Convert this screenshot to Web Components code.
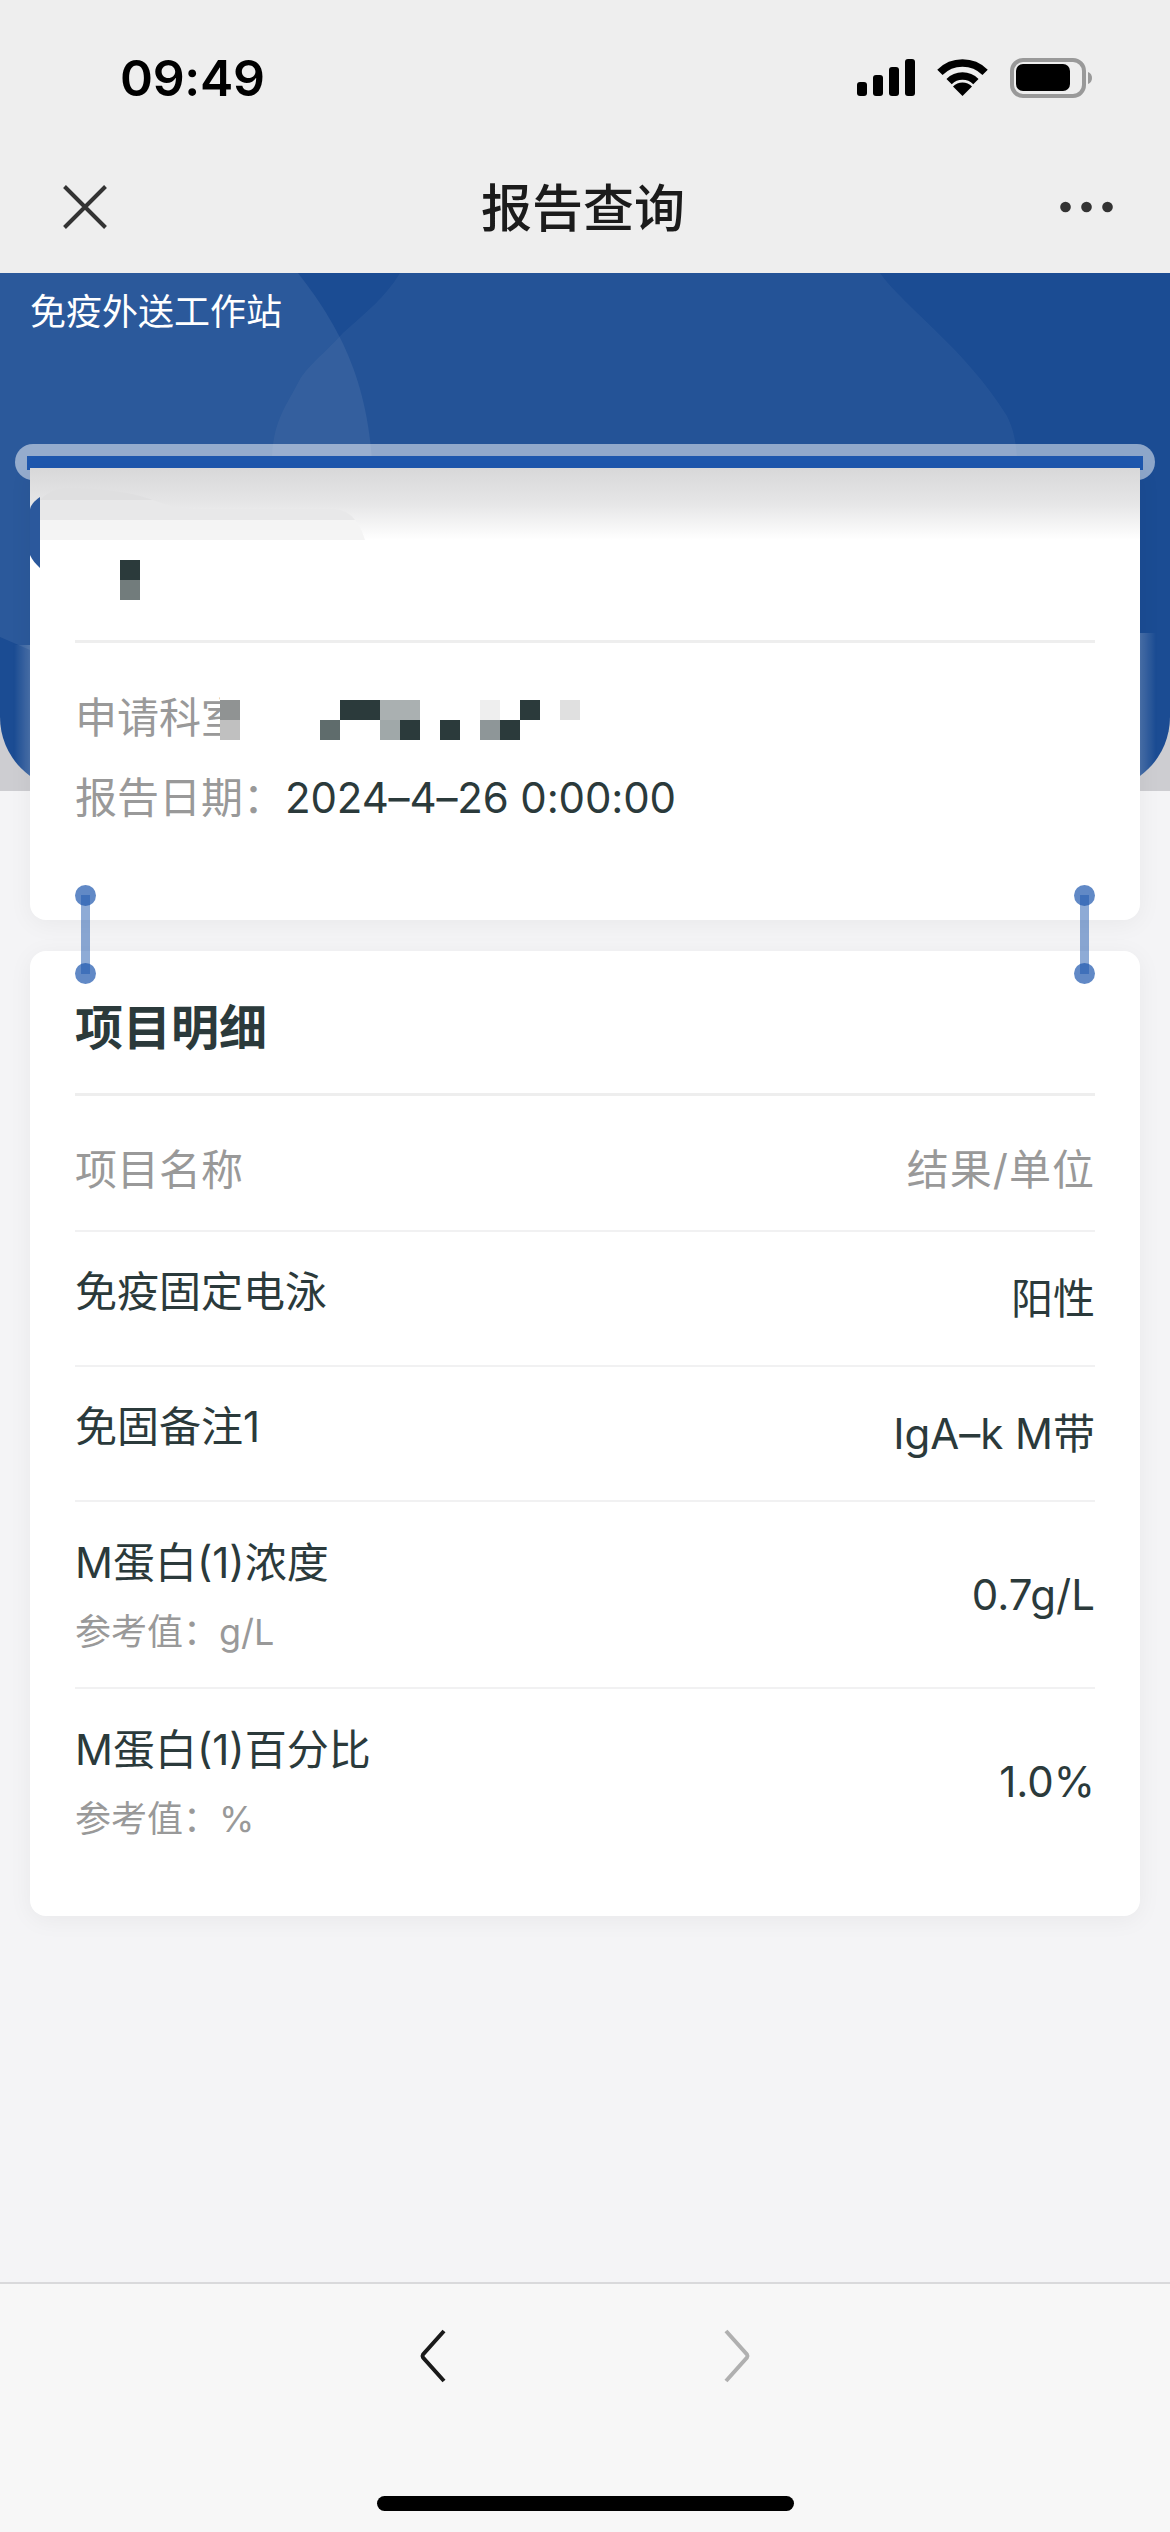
<!DOCTYPE html>
<html lang="zh">
<head>
<meta charset="utf-8">
<title>报告查询</title>
<style>
    html, body { margin: 0; padding: 0; background: #f4f4f6; }
    body { font-family: Inter, "Noto Sans CJK SC", sans-serif; }
    report-page { width: 1170px; height: 2532px; }
</style>
</head>
<body>

<report-page>
    <status-bar time="09:49"></status-bar>
    <nav-bar>报告查询</nav-bar>

    <div slot="main">
        <report-hero>免疫外送工作站</report-hero>
        <card-stack>
            <print-slot></print-slot>

            <report-card printed>
                <div slot="head" style="height:172px"></div>
                <info-line label="申请科室："></info-line>
                <info-line label="报告日期：">2024–4–26 0:00:00</info-line>
                <mosaic-block style="left:90px;top:92px;width:20px;height:40px" nopad cells="0,0,#2b3a3b 0,1,#727c7c"></mosaic-block>
                <mosaic-block style="left:190px;top:227px;width:360px;height:50px" cells="0,0,#909393 0,1,#c0c0c0 5,1,#5f6c6c 6,0,#2b3a3b 7,0,#2b3a3b 8,0,#aab0b1 9,0,#aab0b1 8,1,#a0a8a9 9,1,#2b3a3b 11,1,#2b3a3b 13,0,#eeeeee 13,1,#8e9698 14,1,#2b3a3b 15,0,#2b3a3b 17,0,#e0e0e0"></mosaic-block>
            </report-card>

            <report-card>
                <h2-title slot="head">项目明细</h2-title>
                <detail-row head>
                    <span slot="name">项目名称</span>
                    <span slot="value" style="letter-spacing:1px">结果/单位</span>
                </detail-row>
                <detail-row>
                    <span slot="name">免疫固定电泳</span>
                    <span slot="value">阳性</span>
                </detail-row>
                <detail-row>
                    <span slot="name">免固备注1</span>
                    <span slot="value">IgA–k M带</span>
                </detail-row>
                <detail-row tall>
                    <span slot="name">M蛋白(1)浓度</span>
                    <span slot="ref">参考值：g/L</span>
                    <span slot="value">0.7g/L</span>
                </detail-row>
                <detail-row tall last>
                    <span slot="name">M蛋白(1)百分比</span>
                    <span slot="ref">参考值：%</span>
                    <span slot="value">1.0%</span>
                </detail-row>
            </report-card>

            <card-rivet side="left"></card-rivet>
            <card-rivet side="right"></card-rivet>
        </card-stack>
    </div>

    <bottom-toolbar slot="foot"></bottom-toolbar>
</report-page>

<script>
class ReportPage extends HTMLElement {
    constructor() {
        super()
        this.attachShadow({ mode: 'open' }).innerHTML = `
            <style>
                :host { display: flex; flex-direction: column; overflow: hidden; background: #f4f4f6; color: #2b3a3b; }
                .main { flex: 1; min-height: 0; }
            </style>
            <slot></slot>
            <div class="main"><slot name="main"></slot></div>
            <slot name="foot"></slot>
        `
    }
}

class StatusBar extends HTMLElement {
    constructor() {
        super()
        this.attachShadow({ mode: 'open' }).innerHTML = `
            <style>
                :host { display: flex; height: 154px; box-sizing: border-box; padding: 2px 78px 0 120px; align-items: center; justify-content: space-between; background: #eeeeee; }
                .time { font: 600 50px/1 Inter, "Liberation Sans", sans-serif; letter-spacing: -.3px; color: #000; }
                svg { display: block; }
            </style>
            <span class="time">${this.getAttribute('time')}</span>
            <svg width="235" height="40" viewBox="0 0 235 40">
                <rect x="0" y="24" width="10" height="14" rx="3"/>
                <rect x="16" y="17" width="10" height="21" rx="3"/>
                <rect x="32" y="9" width="10" height="29" rx="3"/>
                <rect x="48" y="1" width="10" height="37" rx="3"/>
                <path d="M82.9 14.4A32 32 0 0 1 128.1 14.4M92.1 23.6A19 19 0 0 1 118.9 23.6" fill="none" stroke="#000" stroke-width="7.5"/>
                <path d="M105.5 38L96 28.5A13.4 13.4 0 0 1 115 28.5Z"/>
                <rect x="155" y="2" width="72" height="36" rx="11" fill="none" stroke="#999" stroke-width="4"/>
                <rect x="159" y="6" width="54" height="27" rx="7"/>
                <path d="M231 14C234 15 235 17.500 235 20C235 22.500 234 25 231 26Z" fill="#999"/>
            </svg>
        `
    }
}

class NavBar extends HTMLElement {
    constructor() {
        super()
        this.attachShadow({ mode: 'open' }).innerHTML = `
            <style>
                :host { display: flex; height: 119px; box-sizing: border-box; padding: 0 57px 17px 63px; align-items: center; justify-content: space-between; background: #eeeeee; }
                .title { font: 500 51px/1 "Noto Sans CJK SC", sans-serif; color: #1b1b1b; margin-left: -1px; }
                svg { display: block; margin-top: 3px; }
            </style>
            <svg width="44" height="44" viewBox="0 0 44 44"><path d="M1.500 1.500L42.500 42.500M42.500 1.500L1.500 42.500" fill="none" stroke="#333" stroke-width="4"/></svg>
            <span class="title"><slot></slot></span>
            <svg width="53" height="12" viewBox="0 0 53 12" fill="#333"><circle cx="5.500" cy="6" r="5.300"/><circle cx="26.500" cy="6" r="5.300"/><circle cx="47.500" cy="6" r="5.300"/></svg>
        `
    }
}

class ReportHero extends HTMLElement {
    constructor() {
        super()
        this.attachShadow({ mode: 'open' }).innerHTML = `
            <style>
                :host { display: block; position: relative; height: 518px; background: #cdcdd1; overflow: hidden; }
                .blue { height: 517px; box-sizing: border-box; padding: 11px 30px; border-radius: 0 0 73px 73px; overflow: hidden; position: relative; background: #1b4c93; }
                svg { position: absolute; left: 0; top: 0; }
                .name { position: relative; font: 400 36px/50px "Noto Sans CJK SC", sans-serif; color: #fff; }
            </style>
            <div class="blue">
                <svg width="1170" height="518" viewBox="0 0 1170 518">
                    <defs>
                        <linearGradient id="glowL" x1="0" x2="1"><stop offset="0" stop-color="#fff" stop-opacity="0"/><stop offset="1" stop-color="#fff" stop-opacity=".2"/></linearGradient>
                        <linearGradient id="glowR" x1="1" x2="0"><stop offset="0" stop-color="#fff" stop-opacity="0"/><stop offset="1" stop-color="#fff" stop-opacity=".2"/></linearGradient>
                    </defs>
                    <path d="M400 0H880C905 35 965 75 1007 143C1013 155 1017 170 1017 190V518H272V190C272 150 285 135 298 110C305 95 320 85 343 60C365 40 385 25 400 0Z" fill="#fff" fill-opacity=".045"/>
                    <path d="M0 0H298C345 60 373 120 373 220C373 340 100 400 30 377L0 364Z" fill="#fff" fill-opacity=".075"/>
                    <rect x="14" y="372" width="16" height="146" fill="url(#glowL)"/>
                    <rect x="1140" y="360" width="16" height="158" fill="url(#glowR)"/>
                </svg>
                <div class="name"><slot></slot></div>
            </div>
        `
    }
}

class CardStack extends HTMLElement {
    constructor() {
        super()
        this.attachShadow({ mode: 'open' }).innerHTML = `
            <style>
                :host { display: flex; flex-direction: column; gap: 0; position: relative; margin-top: -347px; }
                ::slotted(report-card:last-of-type) { margin-top: 31px; }
            </style>
            <slot></slot>
        `
    }
}

class PrintSlot extends HTMLElement {
    constructor() {
        super()
        this.attachShadow({ mode: 'open' }).innerHTML = `
            <style>
                :host { display: block; position: relative; height: 24px; margin: 0 15px; }
                .bar { height: 36px; border-radius: 18px; background: rgba(255,255,255,.5); }
                .strip { position: absolute; left: 12px; right: 12px; top: 12px; height: 14px; background: #1e57ae; }
            </style>
            <div class="bar"></div>
            <div class="strip"></div>
        `
    }
}

class ReportCard extends HTMLElement {
    constructor() {
        super()
        const printed = this.hasAttribute('printed')
        this.attachShadow({ mode: 'open' }).innerHTML = `
            <style>
                :host { display: block; position: relative; z-index: 1; margin: 0 30px; background: #fff; border-radius: 0 0 16px 16px; box-shadow: 0 4px 24px rgba(0,0,0,.05); }
                :host(:not([printed])) { border-radius: 16px; }
                .fold { position: absolute; left: 0; top: 0; display: block; }
                .head { position: relative; margin: 0 45px; border-bottom: 3px solid #eeeeee; }
                .body { padding: 45px 45px 92px; }
                :host(:not([printed])) .body { padding: 0 45px 41px; }
            </style>
            ${printed ? `
            <svg class="fold" width="1110" height="110" viewBox="0 0 1110 110">
                <defs>
                    <linearGradient id="fade" x1="0" x2="0" y1="0" y2="1"><stop offset="0" stop-color="#d8d8d9"/><stop offset=".5" stop-color="#e6e6e7"/><stop offset="1" stop-color="#fff"/></linearGradient>
                    <clipPath id="ghost"><path d="M10 32C20 22 30 20 37 20C70 20 100 24 120 31C140 38 150 41 170 41H303C320 41 330 55 335 72H10Z"/></clipPath>
                </defs>
                <rect width="1110" height="72" fill="url(#fade)"/>
                <g clip-path="url(#ghost)">
                    <rect x="10" y="20" width="330" height="12" fill="#dfdfe0"/>
                    <rect x="10" y="32" width="330" height="20" fill="#e8e8e9"/>
                    <rect x="10" y="52" width="330" height="20" fill="#f4f4f4"/>
                </g>
                <path d="M10 29C4 33 0 38 0 42V87C2 92 6 96 10 100Z" fill="#2b589c"/>
            </svg>` : ''}
            <div class="head"><slot name="head"></slot></div>
            <div class="body"><slot></slot></div>
        `
    }
}

class H2Title extends HTMLElement {
    constructor() {
        super()
        this.attachShadow({ mode: 'open' }).innerHTML = `
            <style>
                :host { display: block; height: 142px; box-sizing: border-box; padding-top: 43px; font: 700 48px/60px "Noto Sans CJK SC", sans-serif; color: #2b3a3b; }
            </style>
            <slot></slot>
        `
    }
}

class InfoLine extends HTMLElement {
    constructor() {
        super()
        this.attachShadow({ mode: 'open' }).innerHTML = `
            <style>
                :host { display: flex; font: 400 42px/60px Inter, "Noto Sans CJK SC", sans-serif; letter-spacing: -.15px; color: #2b3a3b; }
                :host(:not(:first-of-type)) { margin-top: 20px; }
                .label { color: #999; letter-spacing: 0; }
            </style>
            <span class="label">${this.getAttribute('label')}</span>
            <slot></slot>
        `
    }
}

class MosaicBlock extends HTMLElement {
    constructor() {
        super()
        const cells = (this.getAttribute('cells') || '').split(' ').map((c) => {
            const [col, row, color] = c.split(',')
            return `<i style="grid-column:${+col + 1};grid-row:${+row + 1};background:${color}"></i>`
        }).join('')
        this.attachShadow({ mode: 'open' }).innerHTML = `
            <style>
                :host { display: block; position: absolute; background: #fff; }
                .grid { display: grid; grid-template-columns: repeat(18, 20px); grid-template-rows: repeat(2, 20px); padding-top: 5px; }
                :host([nopad]) .grid { padding-top: 0; }
                i { display: block; }
            </style>
            <div class="grid">${cells}</div>
        `
    }
}

class DetailRow extends HTMLElement {
    constructor() {
        super()
        this.attachShadow({ mode: 'open' }).innerHTML = `
            <style>
                :host { display: flex; height: 135px; box-sizing: border-box; justify-content: space-between; align-items: center; border-bottom: 2px solid #f1f1f2; font: 400 42px/60px Inter, "Noto Sans CJK SC", sans-serif; color: #2b3a3b; }
                :host([head]) { height: 136px; padding-top: 14px; color: #999; }
                :host([tall]) { height: 187px; }
                :host([last]) { border-bottom: 0; height: 186px; }
                .left { display: flex; flex-direction: column; align-self: flex-start; padding-top: 30px; }
                :host([head]) .left { align-self: center; padding-top: 0; }
                :host([tall]) .left { padding-top: 31px; }
                .ref { font-size: 36px; line-height: 54px; margin-top: 12px; color: #999; }
            </style>
            <div class="left">
                <slot name="name"></slot>
                <div class="ref" id="ref"><slot name="ref"></slot></div>
            </div>
            <slot name="value"></slot>
        `
        if (!this.querySelector('[slot=ref]')) {
            this.shadowRoot.getElementById('ref').remove()
        }
    }
}

class CardRivet extends HTMLElement {
    constructor() {
        super()
        this.attachShadow({ mode: 'open' }).innerHTML = `
            <style>
                :host { display: block; position: absolute; z-index: 2; top: 441px; width: 21px; height: 99px; }
                :host([side=left]) { left: 75px; }
                :host([side=right]) { right: 75px; }
                .bar { position: absolute; left: 6px; top: 10px; width: 9px; height: 79px; background: rgba(30,87,174,.5); }
                .dot { position: absolute; left: 0; width: 21px; height: 21px; border-radius: 50%; background: rgba(30,87,174,.7); }
                .a { top: 0; }
                .b { bottom: 0; }
            </style>
            <div class="bar"></div>
            <div class="dot a"></div>
            <div class="dot b"></div>
        `
    }
}

class BottomToolbar extends HTMLElement {
    constructor() {
        super()
        this.attachShadow({ mode: 'open' }).innerHTML = `
            <style>
                :host { display: flex; flex-direction: column; align-items: center; height: 250px; box-sizing: border-box; padding-top: 45px; border-top: 2px solid #d9d9db; background: #f7f7f7; }
                .arrows { display: flex; gap: 276px; }
                svg { display: block; }
                .home { width: 417px; height: 15px; margin-top: 113px; border-radius: 8px; background: #000; }
            </style>
            <div class="arrows">
                <svg width="28" height="54" viewBox="0 0 28 54"><path d="M25 2L4 25.500Q3 27 4 28.500L25 52" fill="none" stroke="#1a1a1a" stroke-width="4"/></svg>
                <svg width="28" height="54" viewBox="0 0 28 54"><path d="M3 2L24 25.500Q25 27 24 28.500L3 52" fill="none" stroke="#b0b0b0" stroke-width="4"/></svg>
            </div>
            <div class="home"></div>
        `
    }
}

customElements.define('report-page', ReportPage)
customElements.define('status-bar', StatusBar)
customElements.define('nav-bar', NavBar)
customElements.define('report-hero', ReportHero)
customElements.define('card-stack', CardStack)
customElements.define('print-slot', PrintSlot)
customElements.define('report-card', ReportCard)
customElements.define('h2-title', H2Title)
customElements.define('info-line', InfoLine)
customElements.define('mosaic-block', MosaicBlock)
customElements.define('detail-row', DetailRow)
customElements.define('card-rivet', CardRivet)
customElements.define('bottom-toolbar', BottomToolbar)
</script>
</body>
</html>
